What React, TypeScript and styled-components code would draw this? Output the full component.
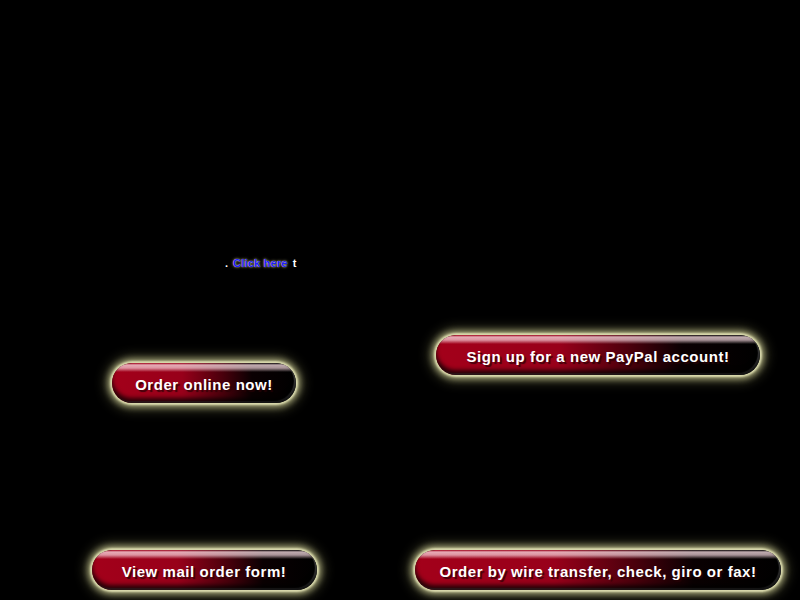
import React from "react";
import styled, { createGlobalStyle } from "styled-components";

const Global = createGlobalStyle`
  html, body { margin: 0; padding: 0; background: #000; }
  body { font-family: "Liberation Sans", Arial, sans-serif; }
`;

const Page = styled.div`
  width: 800px;
  height: 600px;
  overflow: hidden;
  background: #000;
  display: flex;
  flex-direction: column;
  padding-top: 256px;
  box-sizing: border-box;
`;

const ClickLine = styled.p`
  margin: 0;
  padding-left: 225px;
  height: 14px;
  line-height: 14px;
  font-size: 11px;
  font-weight: bold;
  color: #fff;
  display: flex;
  align-items: center;
  gap: 3px;
`;

const ClickLink = styled.a`
  color: #1a1aff;
  text-decoration: none;
  padding: 0 2px;
  letter-spacing: 0.2px;
  text-shadow: 0 0 1px #fff8c0, 0 0 3px #cfc890;
`;

const Grid = styled.div`
  margin-top: 65px;
  display: grid;
  grid-template-columns: 408px 380px;
  row-gap: 147px;
`;

const Cell = styled.div<{ $offset: number }>`
  display: flex;
  justify-content: center;
  padding-top: ${(p) => p.$offset}px;
`;

const Pill = styled.a<{ $w: number }>`
  display: flex;
  align-items: center;
  justify-content: center;
  box-sizing: border-box;
  width: ${(p) => p.$w}px;
  height: 40px;
  border-radius: 20px;
  background:
    linear-gradient(180deg, rgba(255, 235, 240, 0) 0px, rgba(255, 228, 234, 0.75) 2px, rgba(255, 225, 232, 0.65) 5px, rgba(255, 255, 255, 0) 9px),
    linear-gradient(90deg, #a3001a 0%, #98001a 38%, #4a000c 60%, #0a0002 76%, #000 100%);
  box-shadow:
    0 0 2px 2px rgba(225, 225, 180, 0.9),
    0 0 6px 4px rgba(215, 215, 160, 0.7),
    0 0 12px 7px rgba(170, 170, 110, 0.35),
    inset 0 -5px 4px rgba(0, 0, 0, 0.75),
    inset -2px -2px 1px rgba(140, 140, 140, 0.5);
  color: #fff;
  font-size: 15px;
  font-weight: bold;
  letter-spacing: 0.55px;
  text-decoration: none;
  text-shadow: 2px 2px 1px rgba(40, 0, 5, 0.8);
`;

const Label = styled.span`
  position: relative;
  top: 1px;
`;

const buttons = [
  { text: "Order online now!", w: 184, offset: 28 },
  { text: "Sign up for a new PayPal account!", w: 324, offset: 0 },
  { text: "View mail order form!", w: 225, offset: 0 },
  { text: "Order by wire transfer, check, giro or fax!", w: 366, offset: 0 },
];

export default function App() {
  return (
    <>
      <Global />
      <Page>
        <ClickLine>
          <span>.</span>
          <ClickLink href="#">Click here</ClickLink>
          <span>t</span>
        </ClickLine>
        <Grid>
          {buttons.map((b) => (
            <Cell key={b.text} $offset={b.offset}>
              <Pill href="#" $w={b.w}>
                <Label>{b.text}</Label>
              </Pill>
            </Cell>
          ))}
        </Grid>
      </Page>
    </>
  );
}
